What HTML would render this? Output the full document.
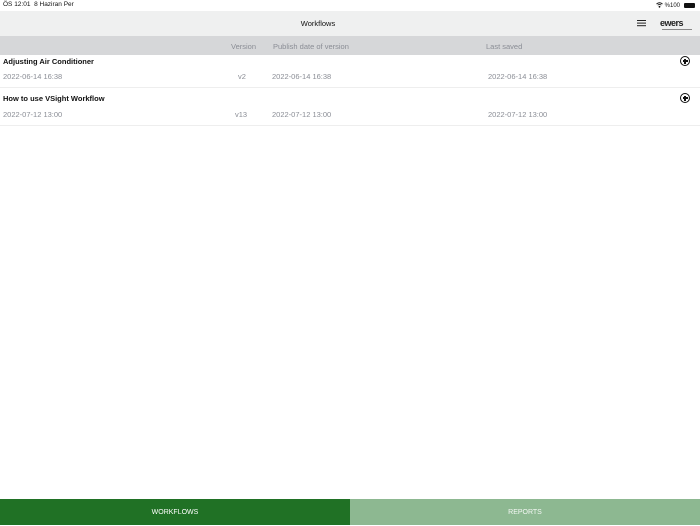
<!DOCTYPE html>
<html><head><style>
body{margin:0;width:700px;height:525px;position:relative;overflow:hidden;background:#fff;font-family:"Liberation Sans",sans-serif;}
.a{position:absolute;white-space:nowrap}
.g{color:#8a8d95;font-size:7.5px}
.t{color:#111;font-size:7.5px;font-weight:bold}
.plus{position:absolute;width:8px;height:8px;border:1.3px solid #111;border-radius:50%;}
.plus:before{content:"";position:absolute;left:3.4px;top:1.5px;width:1.2px;height:5px;background:#111}
.plus:after{content:"";position:absolute;left:1.5px;top:3.4px;width:5px;height:1.2px;background:#111}
</style></head><body>
<div class="a" style="left:3px;top:1px;font-size:6.5px;color:#111">ÖS 12:01 &nbsp;8 Haziran Per</div>
<div class="a" style="left:656px;top:2px;font-size:6px;color:#111">
<svg width="7" height="6" viewBox="0 0 7 6" style="vertical-align:-1px"><path d="M0.5 2 Q3.5 -0.5 6.5 2 M1.7 3.2 Q3.5 1.7 5.3 3.2" stroke="#111" fill="none" stroke-width="0.9"/><circle cx="3.5" cy="4.8" r="0.9" fill="#111"/></svg> %100</div>
<div class="a" style="left:684px;top:3px;width:11px;height:5px;background:#111;border-radius:1px"></div>
<div class="a" style="left:0;top:11px;width:700px;height:25px;background:#eff0f0"></div>
<div class="a" style="left:0;top:19px;width:636px;text-align:center;font-size:7.5px;color:#111">Workflows</div>
<div class="a" style="left:637px;top:20px;width:9px;height:1.3px;background:#222;box-shadow:0 2.6px 0 #222,0 5.2px 0 #222"></div>
<div class="a" style="left:660px;top:18px;font-size:9px;font-weight:bold;color:#222;letter-spacing:-0.5px">ewers</div>
<div class="a" style="left:662px;top:29px;width:30px;height:1px;background:#888"></div>
<div class="a" style="left:0;top:36px;width:700px;height:19px;background:#d6d7d9"></div>
<div class="a g" style="left:231px;top:42px">Version</div>
<div class="a g" style="left:273px;top:42px">Publish date of version</div>
<div class="a g" style="left:486px;top:42px">Last saved</div>
<div class="a t" style="left:3px;top:57px">Adjusting Air Conditioner</div>
<div class="plus" style="left:680px;top:56px"></div>
<div class="a g" style="left:3px;top:72px">2022-06-14 16:38</div>
<div class="a g" style="left:238px;top:72px">v2</div>
<div class="a g" style="left:272px;top:72px">2022-06-14 16:38</div>
<div class="a g" style="left:488px;top:72px">2022-06-14 16:38</div>
<div class="a" style="left:0;top:87px;width:700px;height:1px;background:#eee"></div>
<div class="a t" style="left:3px;top:94px">How to use VSight Workflow</div>
<div class="plus" style="left:680px;top:93px"></div>
<div class="a g" style="left:3px;top:110px">2022-07-12 13:00</div>
<div class="a g" style="left:235px;top:110px">v13</div>
<div class="a g" style="left:272px;top:110px">2022-07-12 13:00</div>
<div class="a g" style="left:488px;top:110px">2022-07-12 13:00</div>
<div class="a" style="left:0;top:125px;width:700px;height:1px;background:#eee"></div>
<div class="a" style="left:0;top:499px;width:350px;height:26px;background:#207125;color:#fff;font-size:7px;text-align:center;line-height:27px">WORKFLOWS</div>
<div class="a" style="left:350px;top:499px;width:350px;height:26px;background:#8db891;color:#f4f8f4;font-size:7px;text-align:center;line-height:27px">REPORTS</div>
</body></html>
